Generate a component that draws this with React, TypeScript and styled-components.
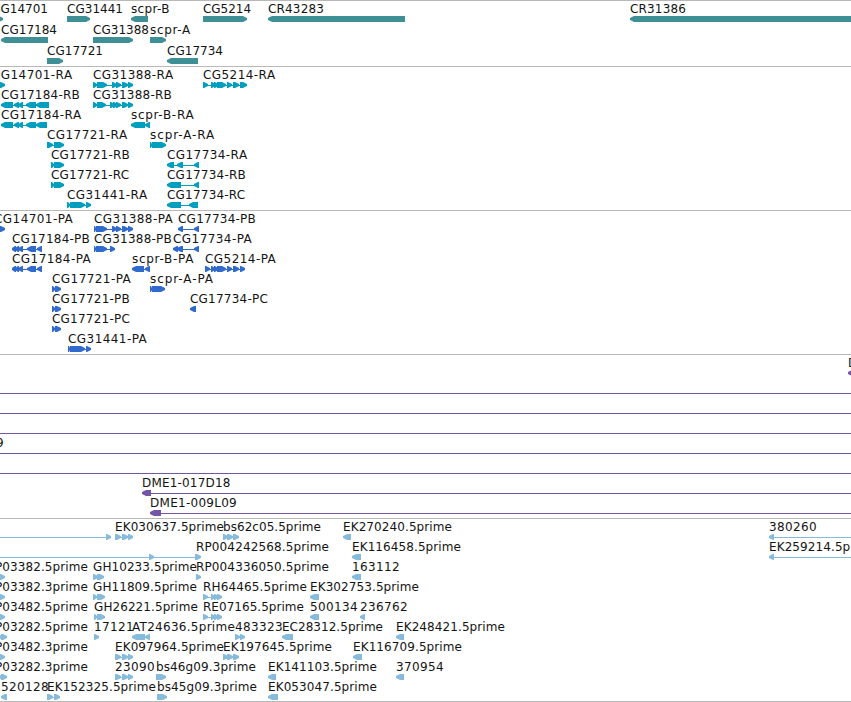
import styled, { createGlobalStyle } from 'styled-components';

type Exon = [number, number];

interface IFeature {
  name?: string;
  labelX?: number;
  strand: 1 | -1;
  exons: Exon[];
  // intron line that runs past the visible region
  from?: number;
  to?: number;
}

interface ITrack {
  id: string;
  color: string;
  rowHeight: number;
  gap: number;
  rows: IFeature[][];
}

const VIEW_WIDTH = 851;
const TIP = 5;

const fwd = (name: string, ...exons: Exon[]): IFeature => ({ name, strand: 1, exons });
const rev = (name: string, ...exons: Exon[]): IFeature => ({ name, strand: -1, exons });
const span = (): IFeature => ({ strand: -1, exons: [], from: 0, to: VIEW_WIDTH });

const ek3: Exon[] = [[115, 121], [122, 128], [128, 133]];
const bs3: Exon[] = [[223, 228], [227, 233], [233, 239]];
const rh4: Exon[] = [[203, 208], [211, 215], [214, 218], [217, 222]];
const pa17184: Exon[] = [[12, 16], [15, 19], [18, 23], [27, 36], [37, 42]];

const tracks: ITrack[] = [
  {
    id: 'gene',
    color: '#3f8f96',
    rowHeight: 21,
    gap: 2,
    rows: [
      [
        { ...fwd('CG14701', [-20, 3]), labelX: -8 },
        fwd('CG31441', [67, 90]),
        rev('scpr-B', [131, 148]),
        fwd('CG5214', [203, 247]),
        rev('CR43283', [268, 405]),
        rev('CR31386', [630, 860]),
      ],
      [rev('CG17184', [1, 48]), fwd('CG31388', [93, 133]), fwd('scpr-A', [150, 166])],
      [fwd('CG17721', [47, 63]), rev('CG17734', [167, 198])],
    ],
  },
  {
    id: 'transcript',
    color: '#009fbf',
    rowHeight: 20,
    gap: 3,
    rows: [
      [
        { ...fwd('CG14701-RA', [-10, 5]), labelX: -8 },
        fwd('CG31388-RA', [93, 97], [97, 107], [112, 117], [116, 121], [122, 128], [128, 133]),
        fwd('CG5214-RA', [203, 208], [211, 215], [214, 218], [217, 226], [227, 232], [233, 239], [240, 247]),
      ],
      [
        rev('CG17184-RB', [1, 13], [14, 19], [18, 23], [26, 36], [36, 49]),
        fwd('CG31388-RB', [93, 97], [97, 106], [110, 115], [113, 118], [116, 121], [122, 128], [128, 133]),
      ],
      [
        rev('CG17184-RA', [1, 13], [14, 19], [18, 23], [26, 36], [36, 47]),
        rev('scpr-B-RA', [131, 145], [145, 150]),
      ],
      [fwd('CG17721-RA', [47, 53], [54, 64]), fwd('scpr-A-RA', [150, 152], [152, 166])],
      [fwd('CG17721-RB', [51, 54], [54, 64]), rev('CG17734-RA', [167, 174], [177, 183], [194, 199])],
      [fwd('CG17721-RC', [51, 54], [54, 64]), rev('CG17734-RB', [167, 181], [194, 199])],
      [fwd('CG31441-RA', [67, 70], [70, 85], [86, 91]), rev('CG17734-RC', [167, 181], [189, 198])],
    ],
  },
  {
    id: 'protein',
    color: '#306acc',
    rowHeight: 20,
    gap: 3,
    rows: [
      [
        { ...fwd('CG14701-PA', [-10, 5]), labelX: -6 },
        fwd('CG31388-PA', [94, 96], [96, 107], [112, 117], [116, 121], [122, 128], [128, 133]),
        rev('CG17734-PB', [178, 183], [194, 199]),
      ],
      [
        rev('CG17184-PB', ...pa17184),
        fwd('CG31388-PB', [94, 96], [96, 107], [110, 115]),
        rev('CG17734-PA', [173, 178], [177, 183], [194, 199]),
      ],
      [
        rev('CG17184-PA', ...pa17184),
        rev('scpr-B-PA', [132, 144], [145, 150]),
        fwd('CG5214-PA', [205, 210], [211, 215], [214, 218], [217, 226], [227, 232], [233, 239], [240, 245]),
      ],
      [fwd('CG17721-PA', [52, 55], [55, 61]), fwd('scpr-A-PA', [150, 152], [152, 165])],
      [fwd('CG17721-PB', [52, 55], [55, 61]), rev('CG17734-PC', [190, 196])],
      [fwd('CG17721-PC', [52, 55], [55, 61])],
      [fwd('CG31441-PA', [68, 70], [70, 85], [86, 91])],
    ],
  },
  {
    id: 'bac',
    color: '#7357a6',
    rowHeight: 20,
    gap: 3,
    rows: [
      [rev('DME1', [848, 860])],
      [span()],
      [span()],
      [span()],
      [{ ...span(), name: '9', labelX: -4 }],
      [span()],
      [{ ...rev('DME1-017D18', [142, 151]), to: VIEW_WIDTH }],
      [{ ...rev('DME1-009L09', [150, 161]), to: VIEW_WIDTH }],
    ],
  },
  {
    id: 'est',
    color: '#86bbdc',
    rowHeight: 20,
    gap: 2,
    rows: [
      [
        { strand: 1, exons: [[106, 111]], from: 0 },
        fwd('EK030637.5prime', ...ek3),
        fwd('bs62c05.5prime', ...bs3),
        rev('EK270240.5prime', [343, 351]),
        { ...rev('380260', [769, 774]), to: VIEW_WIDTH },
      ],
      [
        { ...fwd('RP004242568.5prime', [149, 154], [195, 201]), from: 0, labelX: 196 },
        rev('EK116458.5prime', [352, 361]),
        { ...rev('EK259214.5prime', [769, 774]), to: VIEW_WIDTH },
      ],
      [
        { ...fwd('P03382.5prime', [-1, 5]), labelX: -5 },
        fwd('GH10233.5prime', [93, 98], [97, 104]),
        fwd('RP004336050.5prime', [196, 201]),
        rev('163112', [352, 361]),
      ],
      [
        { ...fwd('P03382.3prime', [-1, 5]), labelX: -5 },
        fwd('GH11809.5prime', [93, 97], [97, 105]),
        fwd('RH64465.5prime', ...rh4),
        rev('EK302753.5prime', [310, 319]),
      ],
      [
        { ...fwd('P03482.5prime', [-1, 5]), labelX: -5 },
        fwd('GH26221.5prime', [94, 97], [97, 105]),
        fwd('RE07165.5prime', ...rh4),
        rev('500134', [310, 319]),
        rev('236762', [360, 365]),
      ],
      [
        { ...fwd('P03282.5prime', [-3, 2], [1, 7]), labelX: -5 },
        fwd('17121', [94, 99]),
        rev('AT24636.5prime', [132, 145], [145, 150]),
        fwd('483323', [235, 240], [240, 245]),
        rev('EC28312.5prime', [282, 293]),
        rev('EK248421.5prime', [396, 404]),
      ],
      [
        { ...fwd('P03482.3prime', [-1, 5]), labelX: -5 },
        fwd('EK097964.5prime', ...ek3),
        fwd('EK197645.5prime', ...bs3),
        rev('EK116709.5prime', [353, 362]),
      ],
      [
        { ...fwd('P03282.3prime', [-3, 2], [1, 7]), labelX: -5 },
        fwd('23090', ...ek3),
        fwd('bs46g09.3prime', [156, 166]),
        rev('EK141103.5prime', [268, 276]),
        rev('370954', [396, 404]),
      ],
      [
        rev('520128', [1, 7]),
        fwd('EK152325.5prime', [47, 53], [54, 60]),
        fwd('bs45g09.3prime', [157, 167]),
        rev('EK053047.5prime', [268, 278]),
      ],
    ],
  },
];

// Pixel advances of the browser's label font, and of the font it is set in here
const GRID: Record<string, number> = {
  A: 10, E: 7, G: 8, P: 7, M: 9.5, D: 8.5, L: 7, H: 10, '-': 7, '.': 4, r: 5, i: 4, m: 10, e: 7, c: 6, s: 6, b: 8,
};
const EM: Record<string, number> = {
  A: 0.684, B: 0.686, C: 0.698, D: 0.77, E: 0.632, G: 0.775, H: 0.752, K: 0.656, L: 0.557, M: 0.863,
  P: 0.603, R: 0.695, T: 0.611, '-': 0.361, '.': 0.318, p: 0.635, r: 0.411, i: 0.278, m: 0.974,
  e: 0.615, c: 0.55, s: 0.521, b: 0.635, g: 0.635,
};

const fitSpacing = (text: string) => {
  const diff = [...text].reduce((sum, ch) => sum + (GRID[ch] ?? 8) - (EM[ch] ?? 0.636) * 12, 0);
  return diff / text.length;
};

// arrow body with a two pixel blunt tip
const exonPath = ([a, b]: Exon, strand: number) => {
  const tip = Math.min(TIP, b - a);
  return strand > 0
    ? `M${a} 0H${b - tip + 1}L${b} 2V4L${b - tip + 1} 6H${a}Z`
    : `M${b} 0H${a + tip - 1}L${a} 2V4L${a + tip - 1} 6H${b}Z`;
};

function Feature({ feature }: { feature: IFeature }) {
  const { name, exons, strand } = feature;
  const first = exons[0]?.[0] ?? 0;
  const last = exons[exons.length - 1]?.[1] ?? 0;
  const from = feature.from ?? first;
  const to = feature.to ?? last;
  const isLinked = exons.length !== 1 || feature.from !== undefined || feature.to !== undefined;

  return (
    <>
      {name && (
        <Label $x={feature.labelX ?? first} $spacing={fitSpacing(name)}>
          {name}
        </Label>
      )}
      <Glyph width={VIEW_WIDTH} height='6'>
        {isLinked && <rect x={from} y='3' width={to - from} height='1' />}
        {exons.map((exon, i) => (
          <path key={i} d={exonPath(exon, strand)} />
        ))}
      </Glyph>
    </>
  );
}

function App() {
  return (
    <>
      <GlobalStyle />
      <Viewer>
        {tracks.map((track) => (
          <Track key={track.id} $color={track.color} $gap={track.gap}>
            {track.rows.map((row, i) => (
              <Row key={i} $height={track.rowHeight}>
                {row.map((feature, j) => (
                  <Feature key={j} feature={feature} />
                ))}
              </Row>
            ))}
          </Track>
        ))}
      </Viewer>
    </>
  );
}

export default App;

const GlobalStyle = createGlobalStyle`
  body {
    margin: 0;
    background: #ffffff;
    overflow: hidden;
  }
`;

const Viewer = styled.main`
  width: ${VIEW_WIDTH}px;
  height: 701px;
  overflow: hidden;
  border-bottom: 1px solid #b8b8b8;
  font-family: 'DejaVu Sans', sans-serif;
  font-size: 12px;
  color: #141414;
`;

const Track = styled.section<{ $color: string; $gap: number }>`
  border-top: 1px solid #b8b8b8;
  padding-bottom: ${(props) => props.$gap}px;
  fill: ${(props) => props.$color};
`;

const Row = styled.div<{ $height: number }>`
  position: relative;
  height: ${(props) => props.$height}px;
`;

const Label = styled.span<{ $x: number; $spacing: number }>`
  position: absolute;
  top: 1px;
  left: ${(props) => props.$x}px;
  line-height: 14px;
  letter-spacing: ${(props) => props.$spacing}px;
  white-space: nowrap;
`;

const Glyph = styled.svg`
  position: absolute;
  top: 15px;
  left: 0;
  display: block;
`;
